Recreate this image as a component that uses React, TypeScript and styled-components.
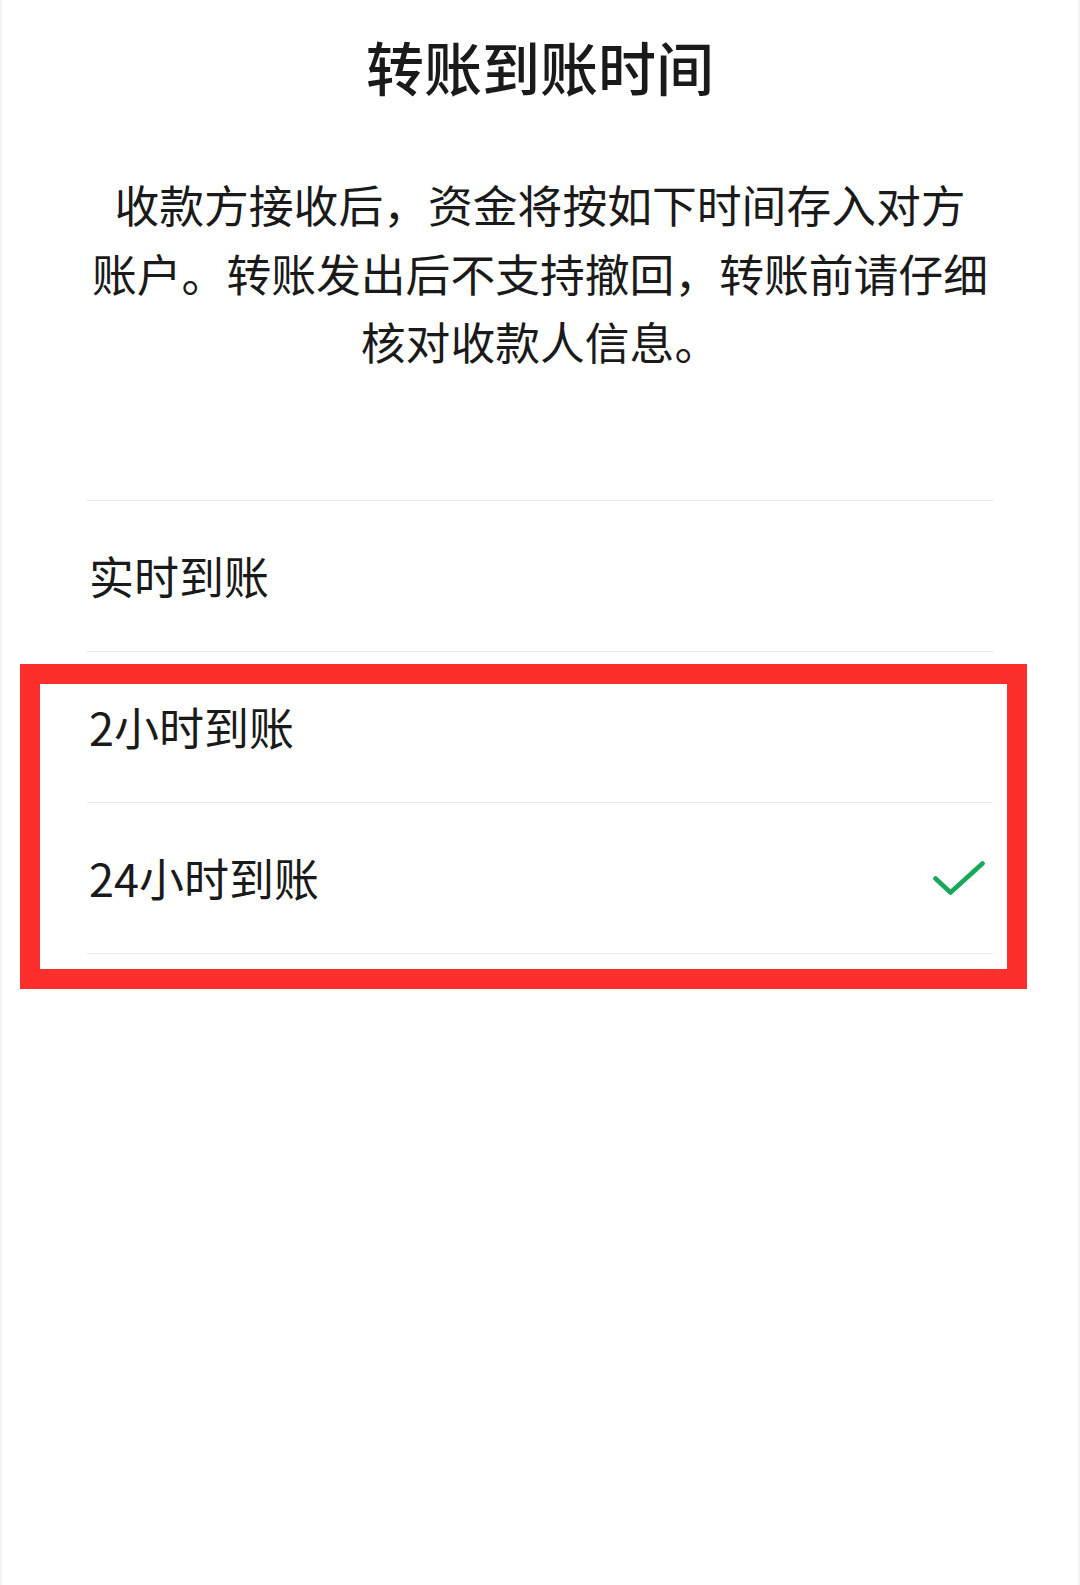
import React from 'react';
import styled, { createGlobalStyle } from 'styled-components';

const GlobalStyle = createGlobalStyle`
  html, body {
    margin: 0;
    padding: 0;
    background: #ffffff;
  }
  body {
    font-family: 'Noto Sans CJK SC', 'Noto Sans', sans-serif;
    color: #1a1a1a;
  }
`;

const options = [
  { id: 'realtime', label: '实时到账', checked: false },
  { id: '2h', label: '2小时到账', checked: false },
  { id: '24h', label: '24小时到账', checked: true },
];

const App = () => {
  return (
    <>
      <GlobalStyle />
      <Page>
        <Title>转账到账时间</Title>
        <Description>
          收款方接收后，资金将按如下时间存入对方
          <br />
          账户。转账发出后不支持撤回，转账前请仔细
          <br />
          核对收款人信息。
        </Description>
        <OptionList>
          {options.map((opt) => (
            <OptionRow key={opt.id}>
              <OptionLabel>{opt.label}</OptionLabel>
              {opt.checked && (
                <CheckIcon viewBox="0 0 52 34" width="52" height="34">
                  <path
                    d="M2.5 17.5 L17.5 31.5 L49.5 2.5"
                    fill="none"
                    stroke="#17a85a"
                    strokeWidth="4.6"
                    strokeLinecap="round"
                    strokeLinejoin="round"
                  />
                </CheckIcon>
              )}
            </OptionRow>
          ))}
        </OptionList>
        <Highlight />
      </Page>
    </>
  );
};

const Page = styled.div`
  position: relative;
  box-sizing: border-box;
  width: 1080px;
  height: 1585px;
  padding-top: 26px;
  background: #ffffff;
  border-left: 2px solid #f1f1f1;
  border-right: 2px solid #f1f1f1;
  overflow: hidden;
`;

const Title = styled.h1`
  margin: 0;
  text-align: center;
  font-size: 58px;
  line-height: 80px;
  font-weight: 500;
  color: #1a1a1a;
`;

const Description = styled.p`
  margin: 64px 0 0;
  text-align: center;
  font-size: 44.8px;
  line-height: 68.5px;
  font-weight: 400;
  color: #1a1a1a;
`;

const OptionList = styled.div`
  margin: 124px 85px 0 85px;
  border-top: 1px solid #e8e8e8;
`;

const OptionRow = styled.div`
  height: 150px;
  display: flex;
  align-items: center;
  justify-content: space-between;
  padding-right: 8px;
  border-bottom: 1px solid #e8e8e8;
`;

const OptionLabel = styled.span`
  font-size: 45px;
  line-height: 1;
  padding-left: 2px;
  color: #1a1a1a;
`;

const CheckIcon = styled.svg`
  display: block;
`;

const Highlight = styled.div`
  position: absolute;
  left: 18px;
  top: 664px;
  width: 1007px;
  height: 325px;
  box-sizing: border-box;
  border: 20px solid #fd2f2c;
  pointer-events: none;
`;

export default App;
